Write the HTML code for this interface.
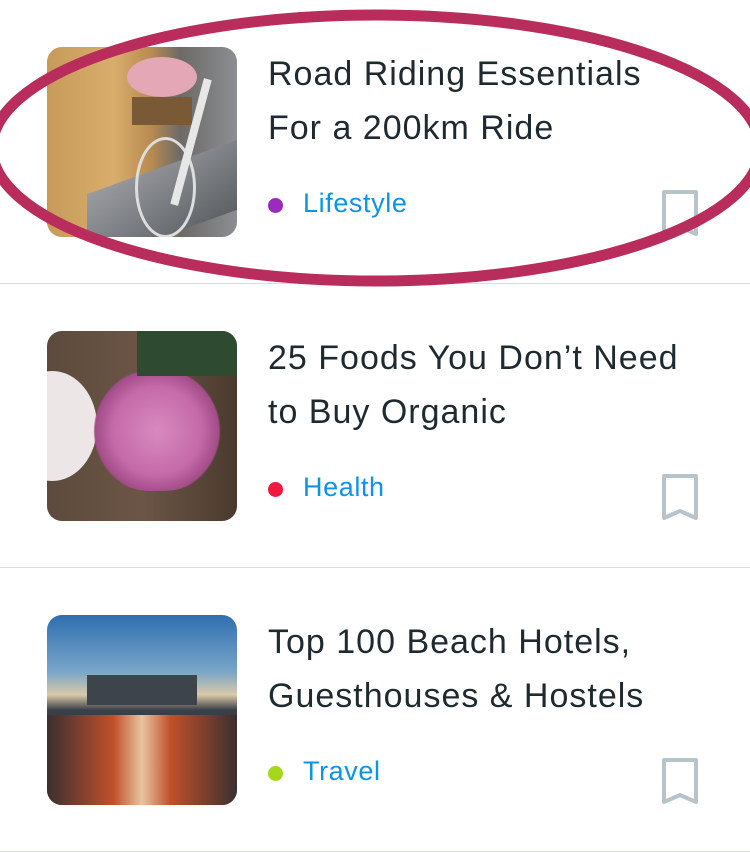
<!DOCTYPE html>
<html><head><meta charset="utf-8"><style>
body{margin:0;width:750px;height:852px;background:#fff;font-family:"Liberation Sans",Arial,sans-serif;overflow:hidden;position:relative}
.row{position:absolute;left:0;width:750px;height:284px;border-bottom:1.5px solid #d9dde0;box-sizing:border-box}
.img{position:absolute;left:47px;top:47px;width:190px;height:190px;border-radius:15px;overflow:hidden}
.t{position:absolute;left:268px;top:47px;font-size:34px;letter-spacing:1px;line-height:54px;color:#1f2a30;width:480px;white-space:nowrap}
.dot{position:absolute;left:268px;top:198px;width:15px;height:15px;border-radius:50%}
.cat{position:absolute;left:303px;top:188px;font-size:27px;letter-spacing:0.6px;color:#0a95e8}
.bm{position:absolute;left:661px;top:189px}
</style></head><body>
<div class="row" style="top:0">
 <div class="img" style="background:linear-gradient(90deg,#c79a5a 0%,#d8ae6c 35%,#b88a50 55%,#6d6a66 70%,#8b8e93 100%)">
  <div style="position:absolute;left:40px;top:120px;width:150px;height:70px;background:linear-gradient(160deg,#9a9ca0,#5d6166);transform:skewY(-20deg)"></div>
  <div style="position:absolute;left:85px;top:50px;width:60px;height:28px;background:#7a5a36"></div>
  <div style="position:absolute;left:80px;top:10px;width:70px;height:40px;border-radius:50%;background:#e3a7b5"></div>
  <div style="position:absolute;left:88px;top:90px;width:55px;height:95px;border:3px solid #ddd;border-radius:50%"></div>
  <div style="position:absolute;left:140px;top:30px;width:8px;height:130px;background:#e7e7e7;transform:rotate(15deg)"></div>
 </div>
 <div class="t">Road Riding Essentials<br>For a 200km Ride</div>
 <div class="dot" style="background:#9b2bbd"></div><div class="cat">Lifestyle</div>
 <svg class="bm" width="38" height="50" viewBox="0 0 38 50"><path d="M3 3H35V45L19 38L3 45Z" fill="none" stroke="#b8c4cc" stroke-width="4" stroke-linejoin="round"/></svg>
</div>
<div class="row" style="top:284px">
 <div class="img" style="background:linear-gradient(90deg,#5c4a3c,#6b5646 50%,#4a3a2e)">
  <div style="position:absolute;left:-40px;top:40px;width:90px;height:110px;border-radius:50%;background:#ede6e6"></div>
  <div style="position:absolute;left:45px;top:40px;width:130px;height:120px;border-radius:45%;background:radial-gradient(circle,#d98ac0 0%,#c46aa8 50%,#a24c88 70%,transparent 72%)"></div>
  <div style="position:absolute;left:90px;top:0;width:100px;height:45px;background:#2e4a30"></div>
 </div>
 <div class="t">25 Foods You Don’t Need<br>to Buy Organic</div>
 <div class="dot" style="background:#f0193f"></div><div class="cat">Health</div>
 <svg class="bm" width="38" height="50" viewBox="0 0 38 50"><path d="M3 3H35V45L19 38L3 45Z" fill="none" stroke="#b8c4cc" stroke-width="4" stroke-linejoin="round"/></svg>
</div>
<div class="row" style="top:568px">
 <div class="img" style="background:linear-gradient(180deg,#2f6fb0 0%,#7aa6c8 30%,#d9c9a8 42%,#3b4048 50%,#2a2c30 100%)">
  <div style="position:absolute;left:40px;top:60px;width:110px;height:30px;background:#3e444c"></div>
  <div style="position:absolute;left:0;top:100px;width:190px;height:90px;background:linear-gradient(90deg,#3a3030,#c0502a 35%,#e8c4a0 50%,#c0502a 65%,#3a3030)"></div>
 </div>
 <div class="t">Top 100 Beach Hotels,<br>Guesthouses &amp; Hostels</div>
 <div class="dot" style="background:#a6d81a"></div><div class="cat">Travel</div>
 <svg class="bm" width="38" height="50" viewBox="0 0 38 50"><path d="M3 3H35V45L19 38L3 45Z" fill="none" stroke="#b8c4cc" stroke-width="4" stroke-linejoin="round"/></svg>
</div>
<svg style="position:absolute;left:0;top:0" width="750" height="300"><ellipse cx="376" cy="148" rx="384" ry="133" fill="none" stroke="#b92d5c" stroke-width="11"/></svg>
</body></html>
